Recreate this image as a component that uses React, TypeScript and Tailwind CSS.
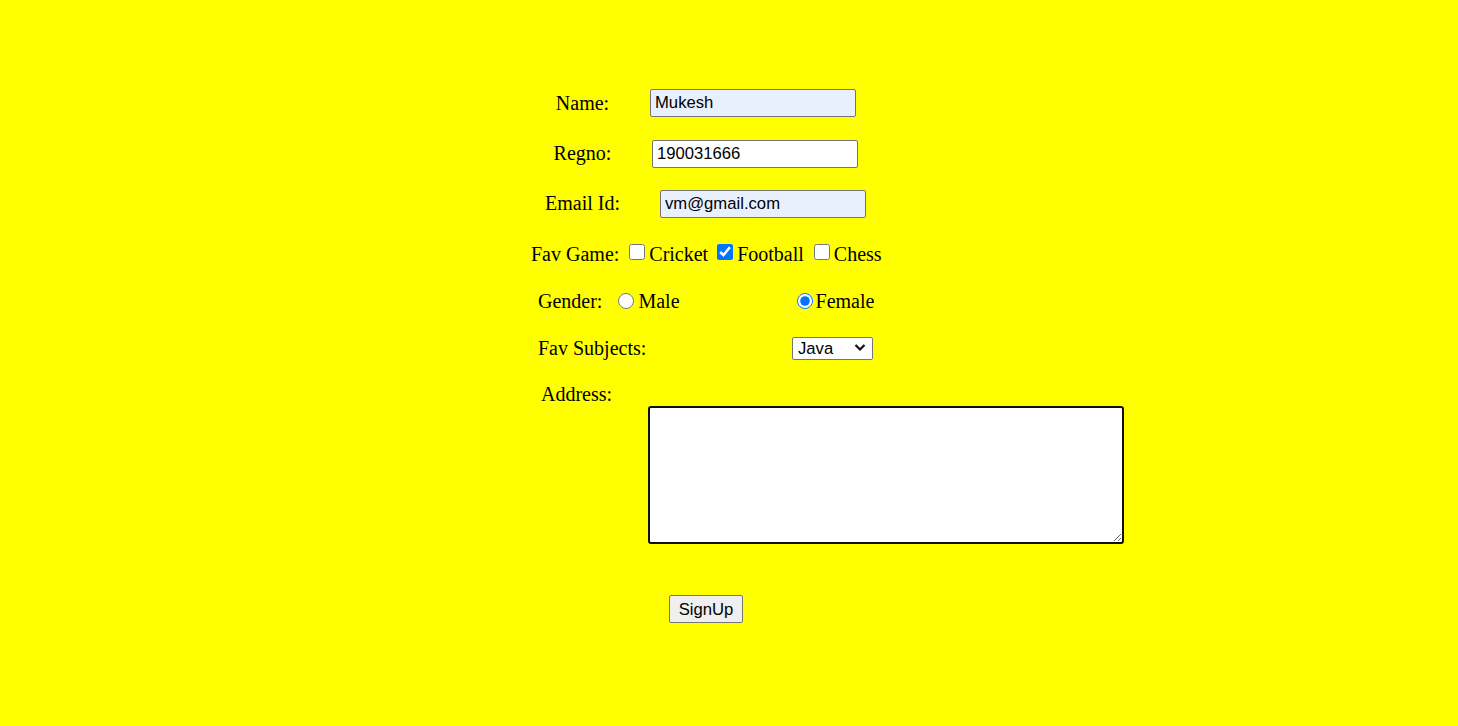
import React from "react";

const serif = "font-['Liberation_Serif','Times_New_Roman',serif] text-[20px] leading-[23px] text-black";
const sans = "font-['Liberation_Sans',Arial,sans-serif] text-[16.67px] text-black";

function TextField({ value, autofill, className }: { value: string; autofill?: boolean; className: string }) {
  return (
    <input
      type="text"
      defaultValue={value}
      className={`${sans} h-[28px] w-[206px] rounded-[2px] border border-[#767676] px-[4px] ${
        autofill ? "bg-[#e8f0fe]" : "bg-white"
      } ${className}`}
    />
  );
}

export default function App() {
  return (
    <div className={`min-h-screen w-full bg-[#ffff00] ${serif}`}>
      <form className="flex flex-col pt-[89px] pb-[103px]" onSubmit={(e) => e.preventDefault()}>
        {/* Name */}
        <div className="flex h-[28px] items-center pl-[530px]">
          <span className="w-[105px] text-center">Name:</span>
          <TextField value="Mukesh" autofill className="ml-[15px]" />
        </div>

        {/* Regno */}
        <div className="mt-[23px] flex h-[27px] items-center pl-[530px]">
          <span className="w-[105px] text-center">Regno:</span>
          <TextField value="190031666" className="ml-[17px] h-[27px]" />
        </div>

        {/* Email */}
        <div className="mt-[23px] flex h-[27px] items-center pl-[530px]">
          <span className="w-[105px] text-center">Email Id:</span>
          <TextField value="vm@gmail.com" autofill className="ml-[25px] h-[27px]" />
        </div>

        {/* Fav Game */}
        <div className="mt-[25px] flex h-[24px] items-center pl-[531px]">
          <span>Fav Game:</span>
          <input type="checkbox" className="m-0 mb-[4px] ml-[10px] h-4 w-4" />
          <span className="ml-[4px]">Cricket</span>
          <input type="checkbox" defaultChecked className="m-0 mb-[4px] ml-[9px] h-4 w-4" />
          <span className="ml-[4px]">Football</span>
          <input type="checkbox" className="m-0 mb-[4px] ml-[10px] h-4 w-4" />
          <span className="ml-[4px]">Chess</span>
        </div>

        {/* Gender */}
        <div className="mt-[23px] flex h-[24px] items-center pl-[538px]">
          <span>Gender:</span>
          <input type="radio" name="gender" className="m-0 ml-[16px] h-4 w-4" />
          <span className="ml-[4px]">Male</span>
          <input type="radio" name="gender" defaultChecked className="m-0 ml-[117px] h-4 w-4" />
          <span className="ml-[3px]">Female</span>
        </div>

        {/* Fav Subjects */}
        <div className="mt-[23px] flex h-[24px] items-center pl-[538px]">
          <span className="w-[254px]">Fav Subjects:</span>
          <div className="relative">
            <select
              defaultValue="Java"
              className={`${sans} h-[23px] w-[81px] appearance-none rounded-[2px] border border-[#767676] bg-white pl-[5px] leading-[21px]`}
            >
              <option>Java</option>
              <option>Python</option>
              <option>C++</option>
            </select>
            <svg
              className="pointer-events-none absolute right-[7px] top-[7px] h-[9px] w-[12px]"
              viewBox="0 0 12 9"
              fill="none"
              stroke="#111"
              strokeWidth="2.2"
            >
              <path d="M1.5 2 L6 6.5 L10.5 2" />
            </svg>
          </div>
        </div>

        {/* Address */}
        <div className="mt-[23px] flex h-[23px] items-center pl-[541px]">
          <span>Address:</span>
        </div>
        <div className="pl-[648px]">
          <textarea className="block h-[138px] w-[476px] rounded-[3px] border-2 border-[#111] bg-white" />
        </div>

        {/* Submit */}
        <div className="mt-[51px] pl-[669px]">
          <button
            type="submit"
            className={`${sans} h-[28px] w-[74px] rounded-[2px] border border-[#767676] bg-[#efefef]`}
          >
            SignUp
          </button>
        </div>
      </form>
    </div>
  );
}
